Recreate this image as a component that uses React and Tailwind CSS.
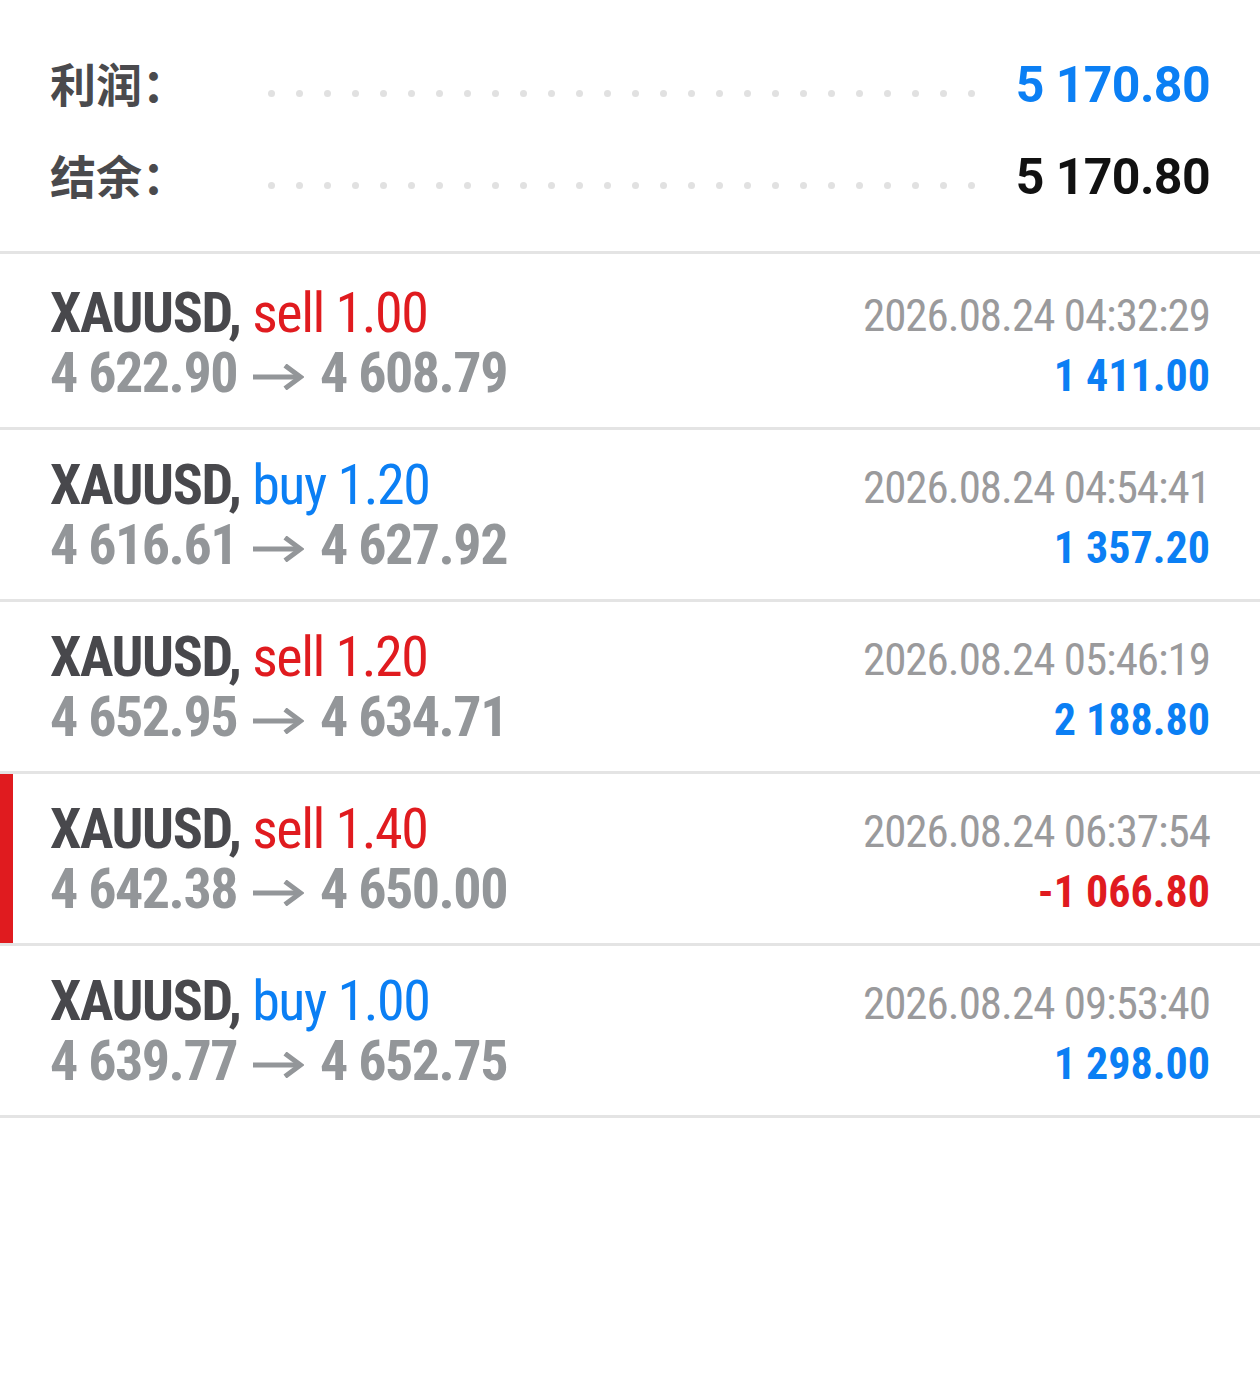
const deals = [
  { side: "sell", lots: "1.00", open: "4 622.90", close: "4 608.79", time: "2026.08.24 04:32:29", profit: "1 411.00" },
  { side: "buy", lots: "1.20", open: "4 616.61", close: "4 627.92", time: "2026.08.24 04:54:41", profit: "1 357.20" },
  { side: "sell", lots: "1.20", open: "4 652.95", close: "4 634.71", time: "2026.08.24 05:46:19", profit: "2 188.80" },
  { side: "sell", lots: "1.40", open: "4 642.38", close: "4 650.00", time: "2026.08.24 06:37:54", profit: "-1 066.80", marked: true },
  { side: "buy", lots: "1.00", open: "4 639.77", close: "4 652.75", time: "2026.08.24 09:53:40", profit: "1 298.00" },
];

const cjk = { fontFamily: '"Noto Sans CJK SC", "Noto Sans", sans-serif' };
const roboto = { fontFamily: 'Roboto, "Liberation Sans", sans-serif' };

function Dots() {
  return (
    <div className="flex w-[707px] justify-between mt-[16px]">
      {Array.from({ length: 26 }).map((_, i) => (
        <span key={i} className="block w-[7px] h-[7px] rounded-full bg-[#e1e1e1]" />
      ))}
    </div>
  );
}

function SummaryRow({ label, value, color }) {
  return (
    <div className="flex items-center h-[92px] px-[50px]">
      <div className="w-[218px] text-[46px] font-bold text-[#4a4a4d] leading-none -mt-[6px]" style={cjk}>
        {label}
      </div>
      <Dots />
      <div className={`ml-auto text-[50px] font-bold leading-none tracking-[-0.6px] ${color}`} style={roboto}>
        {value}
      </div>
    </div>
  );
}

function Arrow() {
  return (
    <svg width="51" height="26" viewBox="0 0 51 26" className="inline-block mx-[16px] align-[2px]">
      <path d="M0 13 H47" stroke="#939699" strokeWidth="5" fill="none" />
      <path d="M32 1.5 L47.5 13 L32 24.5" stroke="#939699" strokeWidth="5" fill="none" strokeLinejoin="miter" />
    </svg>
  );
}

function DealRow({ deal }) {
  const sideColor = deal.side === "sell" ? "text-[#e01b1f]" : "text-[#0b7ff4]";
  const profitColor = deal.profit.startsWith("-") ? "text-[#e01b1f]" : "text-[#0b7ff4]";
  return (
    <div className="relative flex items-center justify-between h-[172px] pl-[50px] pr-[50px] border-b-[3px] border-[#e4e4e4] [font-stretch:condensed]" style={roboto}>
      {deal.marked && <div className="absolute left-0 top-0 bottom-0 w-[13px] bg-[#e01b1f]" />}
      <div className="flex flex-col leading-[60px]">
        <div className="text-[56px] whitespace-nowrap tracking-[-1.4px]">
          <span className="font-bold text-[#48484c]">XAUUSD,</span>{" "}
          <span className={sideColor}>{deal.side} {deal.lots}</span>
        </div>
        <div className="text-[56px] font-bold text-[#939699] whitespace-nowrap tracking-[-1.5px]">
          {deal.open}
          <Arrow />
          {deal.close}
        </div>
      </div>
      <div className="flex flex-col items-end leading-[60px] pt-[6px]">
        <div className="text-[45px] text-[#9a9a9c] whitespace-nowrap tracking-[-1px]">{deal.time}</div>
        <div className={`text-[44px] font-bold whitespace-nowrap ${profitColor}`}>{deal.profit}</div>
      </div>
    </div>
  );
}

export default function App() {
  return (
    <div className="w-[1260px] h-[1384px] bg-white">
      <div className="pt-[39px] pb-[28px] border-b-[3px] border-[#e4e4e4]">
        <SummaryRow label="利润：" value="5 170.80" color="text-[#0b7ff4]" />
        <SummaryRow label="结余：" value="5 170.80" color="text-[#111111]" />
      </div>
      <div className="pt-[4px]">
        {deals.map((d, i) => (
          <DealRow key={i} deal={d} />
        ))}
      </div>
    </div>
  );
}
